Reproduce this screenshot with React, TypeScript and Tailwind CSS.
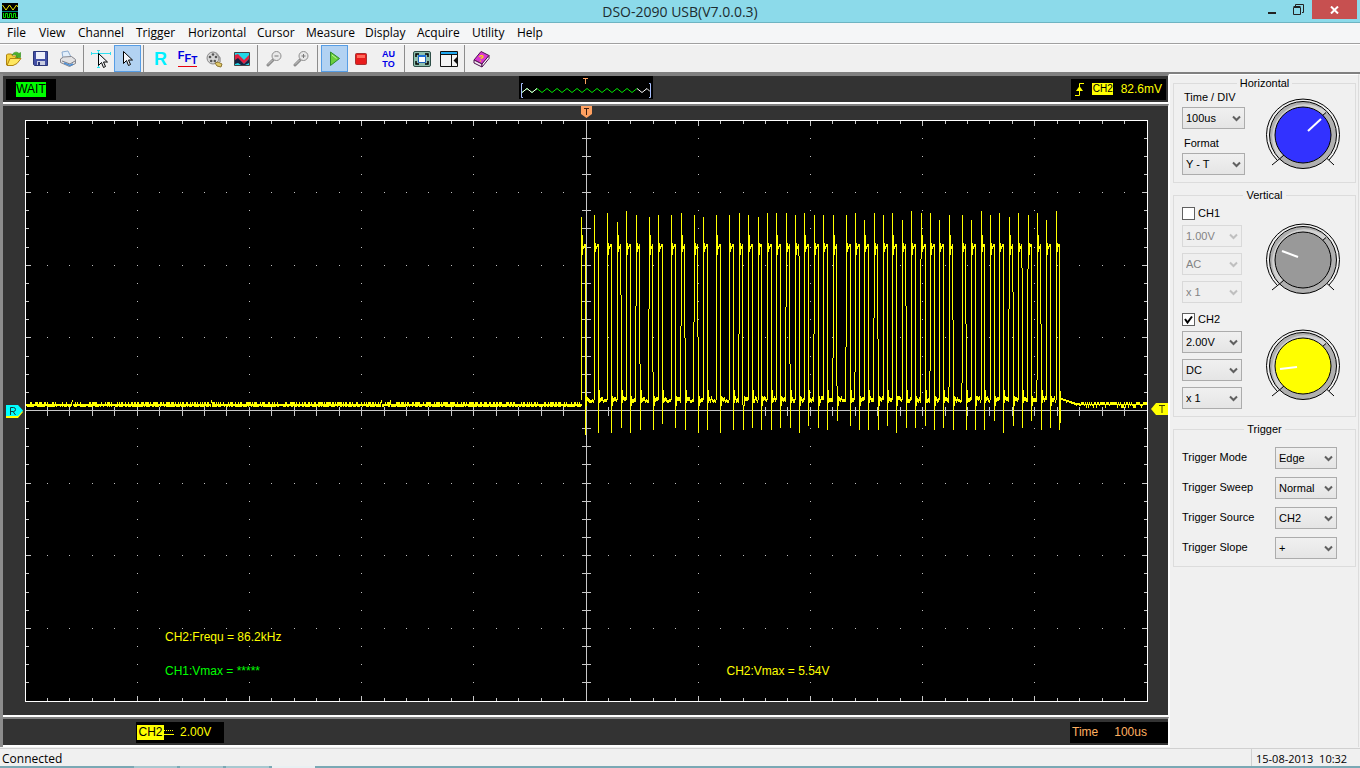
import type { ReactNode } from "react";
import clsx from "clsx";

const menus = [
  "File",
  "View",
  "Channel",
  "Trigger",
  "Horizontal",
  "Cursor",
  "Measure",
  "Display",
  "Acquire",
  "Utility",
  "Help",
];

/* ---------- plot geometry ---------- */

const LEFT = 25;
const TOP = 120;
const WIDTH = 1122;
const HEIGHT = 581;
const MID_X = 586;
const MID_Y = 410;

// [rise x, peak y, fall x, dip y, y of the step on the rise, y of the step on the fall]
const pulses: number[][] = [
  [581, 217, 585, 435],
  [594, 215, 598, 433],
  [607, 213, 611, 433],
  [617, 222, 621, 428, 0, 295],
  [626, 211, 630, 433],
  [636, 215, 640, 430, 306, 364],
  [649, 217, 653, 430, 309, 372],
  [658, 215, 662, 424],
  [671, 215, 675, 428],
  [681, 213, 685, 430, 326, 338],
  [694, 215, 698, 433, 322, 337],
  [703, 217, 707, 430],
  [716, 215, 720, 433],
  [729, 215, 733, 430],
  [739, 213, 743, 430, 334, 405],
  [748, 215, 752, 428],
  [758, 217, 761, 430],
  [767, 213, 771, 430],
  [776, 213, 780, 428],
  [786, 213, 790, 428, 307, 364],
  [795, 215, 799, 433, 0, 256],
  [804, 213, 808, 426],
  [814, 215, 818, 428, 334, 0],
  [823, 215, 827, 430],
  [833, 215, 837, 421, 358, 386],
  [846, 215, 850, 426, 347, 0],
  [855, 213, 859, 430, 372, 0],
  [864, 220, 868, 430],
  [874, 213, 878, 430, 318, 339],
  [883, 215, 887, 426],
  [892, 213, 896, 433],
  [902, 220, 906, 428, 0, 306],
  [911, 211, 915, 428],
  [921, 213, 925, 426, 259, 0],
  [930, 213, 934, 430, 371, 0],
  [939, 220, 943, 428],
  [949, 215, 953, 430, 387, 320],
  [962, 215, 966, 430, 383, 324],
  [971, 220, 975, 430],
  [981, 211, 984, 430],
  [990, 215, 994, 421],
  [999, 213, 1003, 433],
  [1009, 217, 1013, 426, 309, 292],
  [1018, 213, 1022, 428, 0, 268],
  [1028, 215, 1031, 421, 269, 0],
  [1037, 213, 1041, 430, 380, 324],
  [1046, 220, 1050, 428],
  [1056, 211, 1059, 430],
];

const box = (x: number, y: number, w: number, h: number) =>
  `M${x} ${y}h${w}v${h}h${-w}z`;

const noise = (n: number) => {
  const v = Math.sin(n * 12.9898) * 43758.5453;
  return v - Math.floor(v);
};

function buildTrace() {
  const d: string[] = [];

  // quiet part before the burst
  for (let x = 26; x < 582; x++) {
    const top = noise(x) > 0.5 ? 402 : 404;
    const bottom = noise(x + 900) > 0.3 ? 407 : 406;
    d.push(box(x, noise(x * 3) > 0.99 ? 400 : top, 1, bottom - top));
  }

  pulses.forEach(([rise, peak, fall, dip, riseStep, fallStep], i) => {
    if (riseStep) {
      d.push(box(rise - 1, riseStep, 1, 400 - riseStep));
      d.push(box(rise, peak, 1, riseStep - peak));
    } else {
      d.push(box(rise, peak, 1, 400 - peak));
    }
    if (fallStep) {
      d.push(box(fall - 1, 244, 1, fallStep - 244));
      d.push(box(fall, fallStep, 1, dip - fallStep));
    } else {
      d.push(box(fall, 244, 1, dip - 244));
    }

    // ringing on the high level
    const ring = i % 3 === 0 ? 235 : 243;
    d.push(box(rise + 1, ring, 1, 255 - ring - (i % 2) * 3));
    for (let x = rise + 2; x < fall; x++) {
      d.push(box(x, x === fall - 1 ? 244 : 246, 1, 3));
    }

    // settling on the low level
    const next = pulses[i + 1];
    if (!next) return;
    d.push(box(fall + 1, i % 2 ? 390 : 396, 1, i % 2 ? 13 : 10));
    for (let x = fall + 2; x < next[0]; x++) {
      const settled = x - fall > 4;
      const y = settled ? 399 + Math.round(noise(x)) : 396 + Math.round(noise(x) * 3);
      d.push(box(x, y, 1, settled ? 3 : 4));
    }
  });

  // decay after the burst, then quiet again
  d.push(box(1060, 391, 1, 32));
  for (let x = 1061; x < 1080; x++) {
    const y = 398 + Math.round((x - 1061) / 3);
    d.push(box(x, Math.min(y, 403), 1, noise(x) > 0.7 ? 3 : 2));
  }
  for (let x = 1080; x < 1147; x++) {
    const up = noise(x) > 0.5;
    d.push(box(x, up ? 402 : 404, 1, up ? 3 : noise(x + 50) > 0.4 ? 4 : 2));
  }
  return d.join("");
}

function buildGrid() {
  const dots: string[] = [];
  const ticks: string[] = [];
  const px = (i: number) => Math.floor(LEFT + (i * WIDTH) / 50);
  const py = (i: number) => Math.floor(TOP + (i * HEIGHT) / 32);

  for (let i = 1; i < 50; i++) {
    const len = i % 5 === 0 ? 5 : 3;
    ticks.push(box(px(i), TOP + 1, 1, len));
    ticks.push(box(px(i), TOP + HEIGHT - len, 1, len));
    ticks.push(box(px(i), MID_Y - 3, 1, 9));
    for (let j = 4; j < 32; j += 4) dots.push(box(px(i), py(j), 1, 1));
  }
  for (let j = 1; j < 32; j++) {
    const len = j % 4 === 0 ? 5 : 3;
    ticks.push(box(LEFT + 1, py(j), len, 1));
    ticks.push(box(LEFT + WIDTH - len, py(j), len, 1));
    ticks.push(box(MID_X - 4, py(j), 9, 1));
    for (let i = 5; i < 50; i += 5) dots.push(box(px(i), py(j), 1, 1));
  }
  ticks.push(box(LEFT, MID_Y, WIDTH, 1), box(MID_X, TOP, 1, HEIGHT));
  return { dots: dots.join(""), ticks: ticks.join("") };
}

const trace = buildTrace();
const grid = buildGrid();

const Plot = () => (
  <svg
    viewBox="25 120 1123 582"
    preserveAspectRatio="none"
    shapeRendering="crispEdges"
    className="block h-full w-full bg-black"
    role="img"
    aria-label="Waveform"
  >
    <path d={grid.dots} fill="#c0c0c0" />
    <path d={grid.ticks} fill="#c8c8c8" />
    <path d={trace} fill="#ffff00" />
    <path
      d={
        box(LEFT, TOP, 1123, 1) +
        box(LEFT, 701, 1123, 1) +
        box(LEFT, TOP, 1, 582) +
        box(1147, TOP, 1, 582)
      }
      fill="#fff"
    />
  </svg>
);

/* ---------- toolbar icons ---------- */

const Icon = ({ children, w = 18 }: { children: ReactNode; w?: number }) => (
  <svg width={w} height="18" viewBox={`0 0 ${w} 18`} fill="none" aria-hidden="true">
    {children}
  </svg>
);

const OpenIcon = () => (
  <Icon>
    <path d="M1.500 15V5l1-1h4l1 2h5v3" fill="#f5d33c" stroke="#b08410" />
    <path d="M2 15.500l3-7h11l-4 5-4 2z" fill="#ffe860" stroke="#b08410" />
    <path d="M7 5c2-3.500 5-3.500 7-1.500l1.500-1v5h-5l1.500-1.500c-1-1.500-3-2-5-1z" fill="#4caf28" stroke="#2c8a14" strokeWidth=".6" />
  </Icon>
);

const SaveIcon = () => (
  <Icon>
    <path d="M1.500 1.500h14v14h-13l-1-1z" fill="#4350a4" stroke="#2a3578" />
    <path d="M4 2h9v7H4z" fill="#eef0fa" />
    <path d="M5 11h8v4H5z" fill="#c9cde0" />
    <path d="M6 12h2v3H6z" fill="#2a3578" />
  </Icon>
);

const PrintIcon = () => (
  <Icon>
    <path d="M4 8L3 2l6-1 3 6z" fill="#e2effc" stroke="#8cacd0" />
    <path d="M1.500 9l3-2 8-.5 4 3v4l-6 3-9-4z" fill="#e2e2e4" stroke="#85858c" />
    <path d="M3 11l8 3 5-3" stroke="#7e7e86" />
    <path d="M5 13l6 2.500 3-1.500" stroke="#4d8fd5" strokeWidth="1.500" />
  </Icon>
);

const Arrow = ({ dx = 0, dy = 0 }: { dx?: number; dy?: number }) => (
  <path
    d={`M${5 + dx}.5 ${2 + dy}.5v12l3-3 2 5 2-1-2-4.500h4z`}
    stroke="#000"
    strokeWidth="1"
    fill="#f4f6fa"
  />
);

const CrossCursorIcon = () => (
  <Icon w={20}>
    <path d="M0 3.500h20M7.500 0v18M.5 2v3M19.500 2v3M6 .5h3M6 17.500h3" stroke="#30e0f0" />
    <Arrow dx={2} dy={1} />
  </Icon>
);

const PointerIcon = () => (
  <Icon>
    <Arrow dx={-1} dy={-1} />
  </Icon>
);

const FilmIcon = () => (
  <Icon>
    <circle cx="7" cy="8" r="6" fill="#d6d6d6" stroke="#888" />
    <g fill="#555">
      <circle cx="7" cy="4.500" r="1.300" />
      <circle cx="4" cy="7" r="1.300" />
      <circle cx="10" cy="7" r="1.300" />
      <circle cx="5.200" cy="11" r="1.300" />
      <circle cx="8.800" cy="11" r="1.300" />
    </g>
    <path d="M10 3l4 5v4" stroke="#999" strokeWidth="1.500" />
    <path d="M9 13l3-1 4 2-1 3-4-1z" fill="#e0c868" stroke="#8c7430" />
  </Icon>
);

const WaveIcon = () => (
  <Icon>
    <path d="M1.500 2.500h15v13h-15z" fill="#20d8e8" stroke="#444" />
    <path d="M2 5l3-1 6 6 5-5v4l-5 5-6-5-3 2z" fill="#e02040" />
    <path d="M2 10l3-2 6 6 5-5v4l-4 2H8l-3-2-3 1z" fill="#182040" />
  </Icon>
);

const ZoomIcon = ({ plus }: { plus?: boolean }) => (
  <Icon>
    <path d="M7 10l-5 5" stroke="#8c8c8c" strokeWidth="3" strokeLinecap="round" />
    <path d="M6.500 10L2 14.500" stroke="#c8c8c8" />
    <circle cx="10.500" cy="6" r="4.500" fill="#e8e8e8" stroke="#8f8f8f" />
    <path d={plus ? "M8.500 6h4M10.500 4v4" : "M8.500 6h4"} stroke="#777" />
  </Icon>
);

const PlayIcon = () => (
  <Icon>
    <path d="M4.500 2l9 6.500-9 7z" fill="#6bd03c" stroke="#2c8a2c" strokeLinejoin="round" />
    <path d="M6 5l4.500 3.500" stroke="#c2f0a0" />
  </Icon>
);

const StopIcon = () => (
  <Icon>
    <rect x="2.500" y="3.500" width="11" height="11" rx="1" fill="#e81c1c" stroke="#a83030" />
    <path d="M4 5h8v3H4z" fill="#ff6a5a" />
  </Icon>
);

const FullscreenIcon = () => (
  <Icon>
    <rect x=".5" y="1.500" width="17" height="15" rx="1.500" fill="#8fc0ae" stroke="#2f4f48" />
    <path d="M3 7V4h3M12 4h3v3M15 11v3h-3M6 14H3v-3" stroke="#000" strokeWidth="1.500" />
    <path d="M5.500 5.500h7v7h-7z" fill="#fff" stroke="#1c60b8" />
    <path d="M5 5h8v2H5z" fill="#1c70d8" />
  </Icon>
);

const WindowIcon = () => (
  <Icon>
    <path d="M.5 1.500h17v15H.5z" fill="#f4f4f4" stroke="#111" />
    <path d="M1 2h16v2H1z" fill="#20a8f0" />
    <path d="M0 4.500h18M11.500 5v11" stroke="#111" />
    <path d="M17 7v7l-3.500-3.500z" fill="#111" />
  </Icon>
);

const BookIcon = () => (
  <Icon>
    <path d="M1 10l7-8.500 8 4-7 8.500z" fill="#d838d0" stroke="#501050" />
    <path d="M1 10v3l8 4v-3z" fill="#f0e8f0" stroke="#501050" />
    <path d="M9 14l7-8.500v3L9 17z" fill="#fff" stroke="#501050" />
    <path d="M6.500 7c1-2 4-1.500 3.500 0-.5 1-2 .6-2 1.800M7.500 10.500v1" stroke="#ffe800" strokeWidth="1.300" />
  </Icon>
);

const toolGroups: { label: string; icon: ReactNode; active?: boolean }[][] = [
  [
    { label: "Open", icon: <OpenIcon /> },
    { label: "Save", icon: <SaveIcon /> },
    { label: "Print", icon: <PrintIcon /> },
  ],
  [
    { label: "Cross cursor", icon: <CrossCursorIcon /> },
    { label: "Pointer", icon: <PointerIcon />, active: true },
  ],
  [
    {
      label: "Reference",
      icon: <span className="text-lg leading-5 font-bold text-[#00f0ff]">R</span>,
    },
    {
      label: "FFT",
      icon: (
        <span className="flex items-start border-b border-red-600 text-[11px] leading-[10px] font-bold text-[#0000e0]">
          <span>F</span>
          <span className="pt-[3px]">F</span>
          <span className="pt-[6px] text-[10px]">T</span>
        </span>
      ),
    },
    { label: "Record", icon: <FilmIcon /> },
    { label: "Pass / fail", icon: <WaveIcon /> },
  ],
  [
    { label: "Zoom out", icon: <ZoomIcon /> },
    { label: "Zoom in", icon: <ZoomIcon plus /> },
  ],
  [
    { label: "Start", icon: <PlayIcon />, active: true },
    { label: "Stop", icon: <StopIcon /> },
    {
      label: "Auto set",
      icon: (
        <span className="flex flex-col text-[9px] leading-[10px] font-bold text-[#0000e8]">
          <span>AU</span>
          <span>TO</span>
        </span>
      ),
    },
  ],
  [
    { label: "Full screen", icon: <FullscreenIcon /> },
    { label: "Side panel", icon: <WindowIcon /> },
  ],
  [{ label: "Help contents", icon: <BookIcon /> }],
];

/* ---------- side panel ---------- */

interface DropdownProps {
  label: string;
  value: string;
  id?: string;
  disabled?: boolean;
  className: string;
}

const Dropdown = ({ label, value, id, disabled, className }: DropdownProps) => (
  <div className={clsx("relative", className)}>
    <select
      id={id}
      aria-label={id ? undefined : label}
      disabled={disabled}
      defaultValue={value}
      className={clsx(
        "block h-[22px] w-full appearance-none border pl-[3px] text-[11px]",
        disabled
          ? "border-[#d9d9d9] bg-[#efefef] text-[#838383] opacity-100"
          : "border-[#acacac] bg-linear-to-b from-[#f0f0f0] to-[#e5e5e5] text-black",
      )}
    >
      <option>{value}</option>
    </select>
    <svg
      width="9"
      height="8"
      viewBox="0 0 9 8"
      className="pointer-events-none absolute top-2 right-1"
      aria-hidden="true"
    >
      <path
        d="M1 1.500l3.500 3.500L8 1.500"
        fill="none"
        stroke={disabled ? "#bfbfbf" : "#606060"}
        strokeWidth="2"
      />
    </svg>
  </div>
);

// the pointer is given as x1, y1, x2, y2 in a 78 x 74 box
const Knob = ({ color, hand }: { color: string; hand: number[] }) => (
  <svg width="78" height="74" viewBox="0 0 78 74" fill="none" className="shrink-0" aria-hidden="true">
    <path d="M13 62A36.500 35.800 0 1 1 65 62" stroke="#000" />
    <circle cx="39" cy="37" r="33.500" fill="#b0b0b0" stroke="#000" />
    <path d="M16 60.500A33 33 0 0 1 62.500 14L58.500 17.500 19 57z" fill="#d2d2d2" />
    <path d="M58 18l4-3.500M16 60.500l4-3.500M8 67l8-6.500M70 67l-7-6.500" stroke="#000" />
    <circle cx="39" cy="37" r="28" fill={color} stroke="#000" />
    <path d={`M${hand[0]} ${hand[1]}L${hand[2]} ${hand[3]}`} stroke="#fff" strokeWidth="2" />
  </svg>
);

const Group = ({ title, children }: { title: string; children: ReactNode }) => (
  <fieldset className="border border-[#dcdcdc] pb-[7px]">
    <legend className="mx-auto h-[13px] px-[3px] text-[11px] leading-[13px]">{title}</legend>
    <div className="pl-2">{children}</div>
  </fieldset>
);

interface ChannelProps {
  name: string;
  volts: string;
  coupling: string;
  color: string;
  hand: number[];
  on?: boolean;
}

const ChannelControls = ({ name, volts, coupling, color, hand, on }: ChannelProps) => (
  <div className="flex justify-between pr-[13px]">
    <div>
      <label className="mb-[5px] flex h-[13px] items-center gap-[3px]">
        <span className="relative flex">
          <input
            type="checkbox"
            defaultChecked={on}
            className="peer size-[13px] appearance-none border border-[#606060] bg-white"
          />
          <svg
            viewBox="0 0 13 13"
            className="pointer-events-none absolute inset-0 hidden size-[13px] peer-checked:block"
            aria-hidden="true"
          >
            <path d="M3 6l2.500 3.500L10 3.500" fill="none" stroke="#000" strokeWidth="2" />
          </svg>
        </span>
        {name}
      </label>
      <div className="flex flex-col gap-1.5">
        <Dropdown label={`${name} volts per division`} value={volts} disabled={!on} className="w-[60px]" />
        <Dropdown label={`${name} coupling`} value={coupling} disabled={!on} className="w-[60px]" />
        <Dropdown label={`${name} probe`} value="x 1" disabled={!on} className="w-[60px]" />
      </div>
    </div>
    <div className="pt-4">
      <Knob color={color} hand={hand} />
    </div>
  </div>
);

const triggerRows = [
  { id: "mode", label: "Trigger Mode", value: "Edge" },
  { id: "sweep", label: "Trigger Sweep", value: "Normal" },
  { id: "source", label: "Trigger Source", value: "CH2" },
  { id: "slope", label: "Trigger Slope", value: "+" },
];

const SidePanel = () => (
  <aside className="mr-px flex w-[190px] shrink-0 flex-col gap-1.5 border-t border-r border-l border-white border-r-[#dcdcdc] pt-0.5 pr-0.5 pl-[3px] text-[11px] leading-[13px] text-black">
    <Group title="Horizontal">
      <div className="flex justify-between pr-[13px]">
        <div>
          <label htmlFor="time-div" className="mb-0.5 block h-[15px] pl-0.5 leading-[15px]">
            Time / DIV
          </label>
          <Dropdown id="time-div" label="Time / DIV" value="100us" className="w-[63px]" />
          <label htmlFor="format" className="mt-[7px] mb-0.5 block h-[15px] pl-0.5 leading-[15px]">
            Format
          </label>
          <Dropdown id="format" label="Format" value="Y - T" className="w-[63px]" />
        </div>
        <div className="pt-2">
          <Knob color="#3232ff" hand={[44, 33, 57, 21]} />
        </div>
      </div>
    </Group>
    <Group title="Vertical">
      <div className="flex flex-col gap-2.5 pt-[5px]">
        <ChannelControls name="CH1" volts="1.00V" coupling="AC" color="#999999" hand={[18, 28, 34, 34]} />
        <ChannelControls name="CH2" volts="2.00V" coupling="DC" color="#ffff00" hand={[16, 40, 33, 38]} on />
      </div>
    </Group>
    <Group title="Trigger">
      <div className="flex flex-col gap-2 pt-[11px] pr-[18px]">
        {triggerRows.map((row) => (
          <div key={row.id} className="flex justify-between">
            <label htmlFor={row.id} className="leading-5">
              {row.label}
            </label>
            <Dropdown id={row.id} label={row.label} value={row.value} className="w-[62px]" />
          </div>
        ))}
      </div>
    </Group>
  </aside>
);

/* ---------- scope area ---------- */

const zigzag = (from: number, count: number) =>
  `M${from} 16.500` +
  Array.from({ length: count }, (_, i) => `l5 ${i % 2 ? 4 : -4}`).join("");

const Overview = () => (
  <svg
    width="134"
    height="23"
    viewBox="0 0 134 23"
    fill="none"
    className="self-start bg-black"
    aria-hidden="true"
  >
    <path d={zigzag(3, 23)} stroke="#00e800" />
    <path d={zigzag(3, 3)} stroke="#fff" />
    <path d="M118 12.500l5 4 5-4 3 3" stroke="#fff" />
    <path d="M4 7.500H2.500v14H4M130 7.500h1.500v14H130" stroke="#a8c0ff" />
    <path d="M64 2.500h5M66.500 3v5" stroke="#ffa060" />
  </svg>
);

const Strip = ({ className, children }: { className?: string; children: ReactNode }) => (
  <section
    className={clsx(
      "border-t-2 border-r border-b-2 border-t-[#808080] border-r-white border-b-white bg-[#333333]",
      className,
    )}
  >
    {children}
  </section>
);

const Scope = () => (
  <main className="flex min-w-0 flex-1 flex-col border-l-3 border-[#8c8c8c] text-xs">
    <Strip className="grid h-[30px] grid-cols-[1fr_134px_1fr] items-center">
      <div className="ml-[3px] flex h-[21px] w-[50px] items-center justify-center bg-black">
        <span className="h-[15px] bg-[#00ff00] leading-[15px] text-black">WAIT</span>
      </div>
      <Overview />
      <div className="mr-0.5 flex h-[21px] w-[95px] items-center justify-between justify-self-end bg-black pr-1 pl-[3px] text-[#ffff00]">
        <svg width="11" height="15" viewBox="0 0 11 15" fill="none" aria-hidden="true">
          <path d="M1 13.500h4.500v-12H10" stroke="#ffff00" />
          <path d="M2 9l3.500-5L9 9z" fill="#ffff00" />
        </svg>
        <span className="h-3 w-[21px] bg-[#ffff00] text-center text-[10px] leading-3 text-black">CH2</span>
        <span>82.6mV</span>
      </div>
    </Strip>

    <Strip className="grid flex-1 grid-cols-[22px_1fr_20px] grid-rows-[14px_1fr_13px]">
      <div className="col-start-2 flex justify-center">
        <svg width="11" height="12" viewBox="0 0 11 12" aria-hidden="true">
          <path d="M0 0h11v8l-5.500 4L0 8z" fill="#ffa060" />
          <path d="M3 2.500h5M5.500 2v7" stroke="#402010" />
        </svg>
      </div>
      <div className="col-start-1 row-start-2 flex items-center pl-[3px]">
        <svg width="17" height="13" viewBox="0 0 17 13" aria-hidden="true">
          <path d="M0 1h12l5 6-5 6H0z" fill="#ffff00" />
          <path d="M0 0h12l5 5.500-5 5.500H0z" fill="#00ffff" />
          <path d="M4.500 10V2.500h3a1.500 1.500 0 0 1 0 4h-3M7 6.500l2.500 3.500" fill="none" stroke="#104040" />
        </svg>
      </div>
      <div className="relative col-start-2 row-start-2 min-h-[582px]">
        <Plot />
        <div className="absolute inset-x-0 bottom-[14px] grid grid-cols-2 leading-[34px] text-[#ffff00]">
          <p className="pl-[140px]">CH2:Frequ = 86.2kHz</p>
          <p className="col-start-1 pl-[140px] text-[#00ff00]">CH1:Vmax = *****</p>
          <p className="pl-[140px]">CH2:Vmax = 5.54V</p>
        </div>
      </div>
      <div className="col-start-3 row-start-2 flex items-center justify-end">
        <svg width="17" height="16" viewBox="0 0 17 16" aria-hidden="true">
          <path d="M17 0H5L0 6l5 6h12z" fill="#ffff00" />
          <path d="M8 2.500h6M11 2v8" stroke="#404000" />
        </svg>
      </div>
    </Strip>

    <Strip className="flex h-[30px] items-center justify-between">
      <div className="ml-[133px] flex h-[21px] w-[88px] items-center bg-black pl-px text-[#ffff00]">
        <span className="h-[15px] w-[27px] bg-[#ffff00] text-center leading-[15px] text-black">CH2</span>
        <svg width="16" height="6" viewBox="0 0 16 6" className="shrink-0" aria-hidden="true">
          <path d="M0 1.500h10" stroke="#ffff00" strokeDasharray="1 1" />
          <path d="M0 5.500h10" stroke="#ffff00" />
        </svg>
        <span>2.00V</span>
      </div>
      <div className="flex h-[21px] w-[98px] items-center gap-4 bg-black pl-0.5 text-[#ffb060]">
        <span>Time</span>
        <span>100us</span>
      </div>
    </Strip>
  </main>
);

/* ---------- window ---------- */

const TitleBar = () => (
  <header className="grid h-[23px] grid-cols-[1fr_auto_1fr] border-b border-[#6eb4c2] bg-[#8cdaea]">
    <svg width="16" height="16" viewBox="0 0 16 16" fill="none" className="mt-[3px] ml-0.5 bg-black" aria-hidden="true">
      <path d="M.5 2L4 7l3.500-5L11 7l3.500-5L16 4" stroke="#e8e800" />
      <path d="M0 8.500h16" stroke="#008080" />
      <path d="M1.500 10v4.500h2v-4h2v4h2v-4h2v4h2v-4h2v4h2" stroke="#00e000" />
    </svg>
    <h1 className="text-sm leading-[23px] text-[#1c2c30]">DSO-2090 USB(V7.0.0.3)</h1>
    <div className="flex justify-end pr-[3px]">
      <button type="button" aria-label="Minimise" className="flex h-[19px] w-[27px] items-center justify-center">
        <svg width="8" height="10" viewBox="0 0 8 10">
          <path d="M0 7h8v2H0z" fill="#222" />
        </svg>
      </button>
      <button type="button" aria-label="Restore" className="flex h-[19px] w-[27px] items-center justify-center">
        <svg width="11" height="11" viewBox="0 0 11 11" fill="none" stroke="#222">
          <path d="M2.500 2V.5h8v8H9M.5 3.500h7v7h-7zM.5 2.500h7" />
        </svg>
      </button>
      <button type="button" aria-label="Close" className="flex h-[19px] w-[45px] items-center justify-center bg-[#c75050]">
        <svg width="9" height="8" viewBox="0 0 9 8">
          <path d="M1 .5l7 7M8 .5l-7 7" stroke="#fff" strokeWidth="2" />
        </svg>
      </button>
    </div>
  </header>
);

const MenuBar = () => (
  <nav className="grid h-[21px] grid-cols-[32px_39px_58px_52px_69px_49px_59px_52px_55px_45px_auto] border-b border-[#a0a0a0] bg-[#f5f6f7] pl-[7px] text-xs">
    {menus.map((item) => (
      <button key={item} type="button" className="h-5 text-left">
        {item}
      </button>
    ))}
  </nav>
);

const Toolbar = () => (
  <div className="flex h-[30px] border-t border-b-2 border-t-white border-b-[#808080]">
    {toolGroups.map((group, i) => (
      <div key={i} className="flex">
        {i > 0 && <span className="mr-[3px] ml-0.5 w-px bg-[#8c8c8c]" />}
        {group.map((tool) => (
          <button
            key={tool.label}
            type="button"
            aria-label={tool.label}
            className={clsx(
              "flex h-[27px] w-[27px] items-center justify-center font-['Liberation_Sans',sans-serif]",
              tool.active && "border border-[#569de5] bg-[#b2d2f2]",
            )}
          >
            {tool.icon}
          </button>
        ))}
      </div>
    ))}
  </div>
);

export default function App() {
  return (
    <div className="flex min-h-screen flex-col bg-[#f0f0f0] font-['Open_Sans',sans-serif] text-black">
      <TitleBar />
      <MenuBar />
      <Toolbar />
      <div className="flex flex-1 font-['Liberation_Sans',sans-serif]">
        <Scope />
        <SidePanel />
      </div>
      <footer className="mt-px flex h-[18px] border-t border-[#d0d0d0] text-xs leading-[19px]">
        <span className="flex-1 pl-0.5">Connected</span>
        <span className="w-[109px] border-l border-[#d0d0d0] pl-1 text-[11px] leading-[19px] whitespace-pre">
          15-08-2013  10:32
        </span>
      </footer>
      <div className="flex h-0.5 gap-[3px] bg-[#7aa8b4] pl-[134px]">
        <span className="w-[43px] bg-[#a8c8d0]" />
        <span className="w-[43px] bg-[#a8c8d0]" />
        <span className="w-[43px] bg-[#a8c8d0]" />
        <span className="w-[43px] bg-[#e8f0f2]" />
      </div>
    </div>
  );
}
